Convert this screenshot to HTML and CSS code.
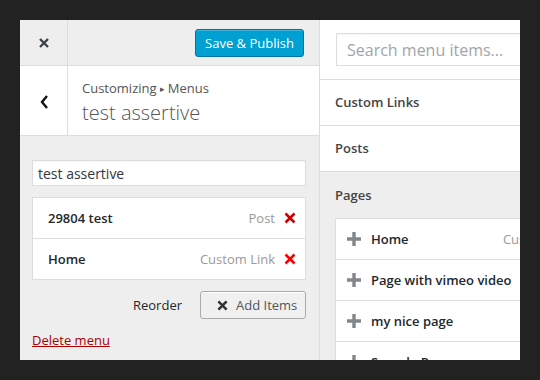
FILE: index.html
```html
<!DOCTYPE html>
<html lang="en">
  <head>
    <meta charset="UTF-8" />
    <meta name="viewport" content="width=device-width, initial-scale=1.0" />
    <link rel="stylesheet" href="styles.css">
  </head>
  <body>
    <div class="frame">
      <div class="controls">
        <div class="topbar">
          <div class="close-cell">
            <svg width="12" height="12" viewBox="0 0 12 12">
              <path d="M2 2 L10 10 M10 2 L2 10" stroke="#3c4048" stroke-width="2.4" />
            </svg>
          </div>
          <div class="topbar-actions">
            <button class="publish">Save &amp; Publish</button>
          </div>
        </div>

        <div class="title-row">
          <div class="back-cell">
            <svg width="10" height="16" viewBox="0 0 10 16">
              <path d="M8 2 L3 8 L8 14" fill="none" stroke="#111" stroke-width="2.4" />
            </svg>
          </div>
          <div class="title">
            <span class="crumb">Customizing <span class="sep">&#9656;</span> Menus</span>
            <h2>test assertive</h2>
          </div>
        </div>

        <div class="menu-body">
          <input class="menu-name" type="text" value="test assertive" />
          <ul class="menu-items">
            <li>
              <span class="item-title">29804 test</span>
              <span class="item-type">Post</span>
              <svg class="remove dark" width="12" height="12" viewBox="0 0 12 12">
                <path d="M1.5 1.5 L10.5 10.5 M10.5 1.5 L1.5 10.5" stroke-width="2.6" />
              </svg>
            </li>
            <li>
              <span class="item-title">Home</span>
              <span class="item-type">Custom Link</span>
              <svg class="remove" width="12" height="12" viewBox="0 0 12 12">
                <path d="M1.5 1.5 L10.5 10.5 M10.5 1.5 L1.5 10.5" stroke-width="2.6" />
              </svg>
            </li>
          </ul>
          <div class="menu-actions">
            <a class="reorder">Reorder</a>
            <button class="add-items">
              <svg width="11" height="11" viewBox="0 0 12 12">
                <path d="M1.5 1.5 L10.5 10.5 M10.5 1.5 L1.5 10.5" stroke="#333" stroke-width="2.8" />
              </svg>
              Add Items
            </button>
          </div>
          <a class="delete-menu">Delete menu</a>
        </div>
      </div>

      <div class="available">
        <div class="available-inner">
          <div class="search-box">
            <input type="text" placeholder="Search menu items..." />
          </div>
          <div class="section">Custom Links</div>
          <div class="section">Posts</div>
          <div class="section open">
            <h3>Pages</h3>
            <ul class="page-list">
              <li>
                <svg class="plus" width="14" height="14" viewBox="0 0 14 14">
                  <path d="M7 0 V14 M0 7 H14" stroke-width="3.4" />
                </svg>
                Home<span class="page-type">Custom Link</span>
              </li>
              <li>
                <svg class="plus" width="14" height="14" viewBox="0 0 14 14">
                  <path d="M7 0 V14 M0 7 H14" stroke-width="3.4" />
                </svg>
                Page with vimeo video
              </li>
              <li>
                <svg class="plus" width="14" height="14" viewBox="0 0 14 14">
                  <path d="M7 0 V14 M0 7 H14" stroke-width="3.4" />
                </svg>
                my nice page
              </li>
              <li>
                <svg class="plus" width="14" height="14" viewBox="0 0 14 14">
                  <path d="M7 0 V14 M0 7 H14" stroke-width="3.4" />
                </svg>
                Sample Page
              </li>
            </ul>
          </div>
        </div>
      </div>
    </div>
  </body>
</html>
```

FILE: styles.css
```css
* {
  margin: 0;
  padding: 0;
  box-sizing: border-box;
}

body {
  font-family: "Open Sans", "Liberation Sans", sans-serif;
  background: #222;
  color: #444;
  padding: 20px;
  width: 540px;
  height: 380px;
  overflow: hidden;
}

.frame {
  display: flex;
  width: 500px;
  height: 340px;
  overflow: hidden;
  background: #eee;
}

/* left column */
.controls {
  width: 300px;
  flex-shrink: 0;
  border-right: 1px solid #ddd;
  background: #eee;
}

.topbar {
  display: flex;
  height: 46px;
  border-bottom: 1px solid #ddd;
}

.close-cell,
.back-cell {
  width: 48px;
  border-right: 1px solid #ddd;
  display: flex;
  align-items: center;
  justify-content: center;
}

.topbar-actions {
  flex: 1;
  display: flex;
  justify-content: flex-end;
  padding: 9px 15px 0 0;
}

.publish {
  width: 109px;
  height: 28px;
  background: #00a0d2;
  border: 1px solid #0073aa;
  border-radius: 3px;
  color: #fff;
  font-family: inherit;
  font-size: 13px;
  box-shadow: inset 0 1px 0 rgba(120, 200, 230, 0.5);
}

.title-row {
  display: flex;
  height: 70px;
  background: #fff;
  border-bottom: 1px solid #ddd;
}

.back-cell {
  padding-top: 2px;
}

.title {
  display: flex;
  flex-direction: column;
  justify-content: center;
  padding: 4px 0 0 14px;
}

.crumb {
  font-size: 13px;
  line-height: 18px;
  color: #555;
}

.crumb .sep {
  font-size: 9px;
  font-family: "DejaVu Sans", sans-serif;
  vertical-align: 1px;
}

.title h2 {
  font-size: 20px;
  font-weight: 300;
  line-height: 29px;
  color: #555;
}

.menu-body {
  padding: 24px 13px 0 12px;
}

.menu-name {
  display: block;
  width: 100%;
  height: 26px;
  border: 1px solid #ddd;
  padding: 0 5px;
  font-family: inherit;
  font-size: 14px;
  color: #32373c;
  background: #fff;
  box-shadow: inset 0 1px 2px rgba(0, 0, 0, 0.04);
}

.menu-items {
  list-style: none;
  margin-top: 11px;
  border: 1px solid #ddd;
  background: #fff;
}

.menu-items li {
  display: flex;
  align-items: center;
  height: 41px;
  padding: 0 9px 0 15px;
  border-bottom: 1px solid #ddd;
  font-size: 13px;
}

.menu-items li:last-child {
  height: 40px;
  border-bottom: none;
}

.item-title {
  flex: 1;
  font-weight: 600;
  color: #23282d;
}

.item-type {
  color: #999;
  margin-right: 9px;
}

.remove {
  stroke: #f00;
}

.remove.dark {
  stroke: #c00;
}

.menu-actions {
  display: flex;
  justify-content: flex-end;
  align-items: center;
  gap: 18px;
  margin-top: 11px;
}

.reorder {
  font-size: 13px;
  color: #23282d;
}

.add-items {
  display: flex;
  align-items: center;
  gap: 8px;
  width: 106px;
  height: 28px;
  padding-left: 16px;
  border: 1px solid #aaa;
  border-radius: 3px;
  background: #f0f0f0;
  font-family: inherit;
  font-size: 13px;
  color: #555;
  box-shadow: inset 0 1px 0 #fff;
}

.delete-menu {
  display: inline-block;
  margin-top: 12px;
  font-size: 13px;
  color: #a00;
  text-decoration: underline;
}

/* right column */
.available {
  flex: 1;
  overflow: hidden;
  background: #fff;
}

.available-inner {
  width: 300px;
}

.search-box {
  height: 60px;
  padding: 13px 0 0 16px;
  border-bottom: 1px solid #ddd;
}

.search-box input {
  width: 260px;
  height: 33px;
  border: 1px solid #ddd;
  padding: 0 10px;
  font-family: inherit;
  font-size: 16px;
  box-shadow: inset 0 1px 2px rgba(0, 0, 0, 0.04);
}

.search-box input::placeholder {
  color: #a0a5aa;
}

.section {
  height: 46px;
  padding: 12px 15px;
  border-bottom: 1px solid #ddd;
  font-size: 13px;
  font-weight: 600;
  line-height: 20px;
  color: #444;
}

.section.open {
  height: auto;
  background: #eee;
  border-bottom: none;
  padding-top: 12px;
}

.section h3 {
  font-size: 13px;
  font-weight: 600;
  line-height: 22px;
  margin-bottom: 12px;
}

.page-list {
  list-style: none;
  border: 1px solid #ddd;
  background: #fff;
}

.page-list li {
  display: flex;
  align-items: center;
  height: 41px;
  padding-left: 11px;
  border-bottom: 1px solid #ddd;
  font-size: 13px;
  font-weight: 600;
  color: #23282d;
}

.plus {
  stroke: #82878c;
  margin-right: 10px;
  flex-shrink: 0;
}

.page-type {
  margin-left: auto;
  margin-right: 26px;
  font-weight: 400;
  color: #999;
}
```
